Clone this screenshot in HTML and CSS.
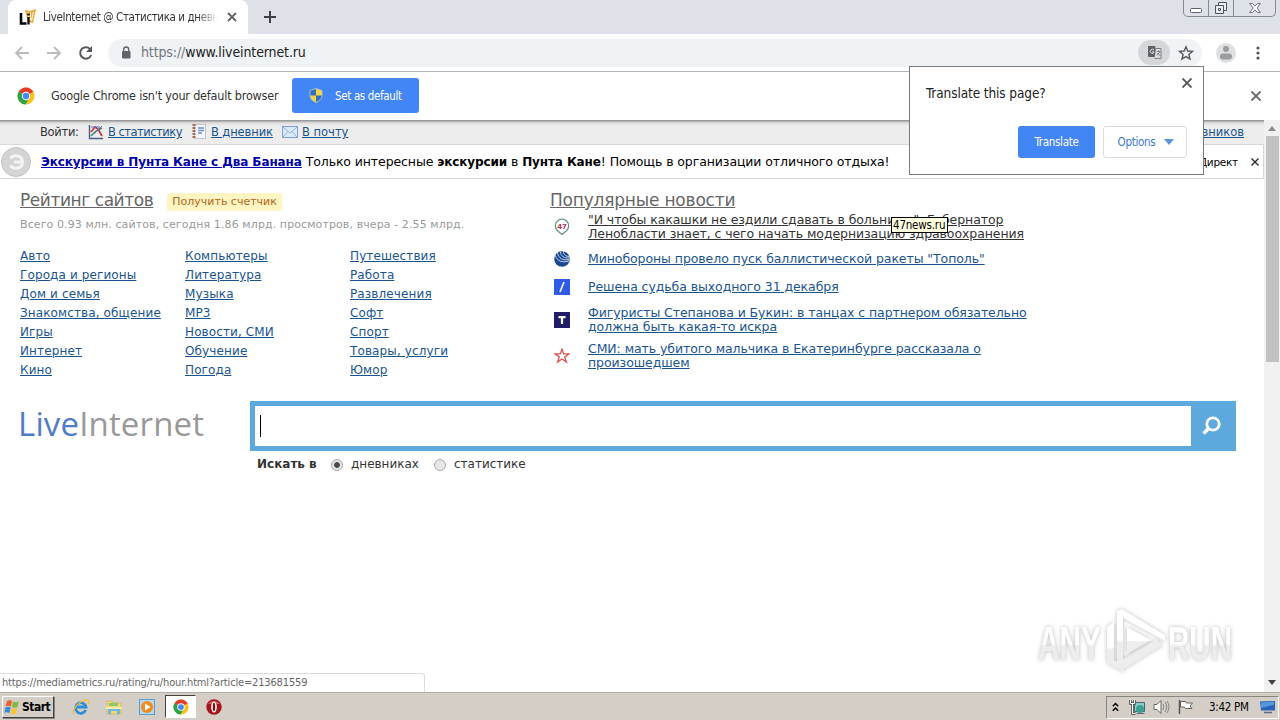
FILE: index.html
```html
<!DOCTYPE html>
<html lang="ru">
<head>
    <meta charset="UTF-8">
    <title>LiveInternet @ Статистика и дневники</title>
    <link rel="stylesheet" href="styles.css">
</head>
<body>
    <div class="tabstrip">
        <div class="tab">
            <svg class="tab-icon" width="18" height="18" viewBox="0 0 18 18">
                <path d="M6 2L11 3L17 1L14 15L9 14Z" fill="#e9a93a"/>
                <path d="M9 4l1 8M11.500 4v8M14.500 4l-2 9" stroke="#fff1c4" stroke-width="1.200"/>
                <path d="M2 5v10.500H7.500" fill="none" stroke="#000" stroke-width="2.600"/>
                <path d="M9.500 9v7.500M9.500 5.500v2" stroke="#000" stroke-width="2.200"/>
            </svg>
            <span class="tab-title">LiveInternet @ Статистика и дневники</span>
            <svg class="tab-close" width="10" height="10" viewBox="0 0 10 10"><path d="M1 1l8 8M9 1l-8 8" stroke="#5f6368" stroke-width="1.800"/></svg>
        </div>
        <svg class="new-tab" width="12" height="12" viewBox="0 0 12 12"><path d="M6 0v12M0 6h12" stroke="#3c4043" stroke-width="2"/></svg>
        <div class="win-buttons">
            <span class="win-btn"><svg width="14" height="15" viewBox="0 0 14 15"><rect x="1.500" y="8.500" width="11" height="4" rx="1" fill="#fff" stroke="#5b606c"/></svg></span>
            <span class="win-btn win-max"><svg width="14" height="15" viewBox="0 0 14 15"><g fill="#e8ebef" stroke="#4d525d"><path d="M4.500 2.500h8v8h-8z"/><path d="M1.500 5.500h8v8h-8z"/><path d="M4.500 8.500h2v2h-2z"/></g></svg></span>
            <span class="win-btn win-close"><svg width="14" height="15" viewBox="0 0 14 15"><path d="M1.500 3.500h3l2.500 2.500l2.500-2.500h3l-3.500 4.500l3.500 4.500h-3l-2.500-2.500l-2.500 2.500h-3l3.500-4.500z" fill="#fff" stroke="#70747c"/></svg></span>
        </div>
    </div>

    <div class="toolbar">
        <svg width="16" height="16" viewBox="0 0 16 16" class="nav nav-off"><path d="M15 8H2M8 2L2 8l6 6"/></svg>
        <svg width="16" height="16" viewBox="0 0 16 16" class="nav nav-off"><path d="M1 8h13M8 2l6 6l-6 6"/></svg>
        <svg width="16" height="16" viewBox="0 0 16 16" class="nav nav-on"><path d="M13.200 10A5.700 5.700 0 1 1 12 4l1 1"/><path d="M14 1v6H8z" class="solid"/></svg>
        <div class="omnibox">
            <svg class="lock" width="10" height="13" viewBox="0 0 10 13"><rect x="1" y="5" width="8.500" height="7.500" rx="1" fill="#5f6368"/><path d="M2.700 5V3.500a2.500 2.500 0 0 1 5 0V5" fill="none" stroke="#5f6368" stroke-width="1.400"/></svg>
            <span class="url"><span class="scheme">https://</span>www.liveinternet.ru</span>
            <span class="translate-chip">
                <svg width="15" height="15" viewBox="0 0 15 15">
                    <path d="M1 1h7l3 11H2a1 1 0 0 1-1-1z" fill="#5f6368"/>
                    <path d="M9 3.500h5v10H7.500" fill="#ddd" stroke="#7d8084"/>
                    <path d="M7 5.200A2 2 0 1 0 7.200 7H5" fill="none" stroke="#ddd"/>
                    <path d="M9.500 6.500h4M11.500 5.500v1M13 6.500l-3 4M10.500 8l3 3" stroke="#7d8084" fill="none"/>
                </svg>
            </span>
            <svg class="star" width="16" height="16" viewBox="0 0 16 16"><path d="M8 1.800l1.800 4.200l4.700.4l-3.600 3l1.100 4.600L8 11.600L4 14l1.100-4.600l-3.600-3l4.700-.4z" fill="none" stroke="#54585d" stroke-width="1.400"/></svg>
        </div>
        <svg class="avatar" width="20" height="20" viewBox="0 0 20 20"><circle cx="10" cy="10" r="10" fill="#dfe0e1"/><circle cx="10" cy="6" r="3" fill="#9a9ca0"/><rect x="4" y="10.500" width="12" height="6" rx="3" fill="#9a9ca0"/></svg>
        <svg class="dots" width="4" height="14" viewBox="0 0 4 14"><g fill="#505458"><circle cx="2" cy="2" r="1.600"/><circle cx="2" cy="7" r="1.600"/><circle cx="2" cy="12" r="1.600"/></g></svg>
    </div>

    <div class="infobar">
        <svg class="chrome-logo" width="18" height="18" viewBox="0 0 18 18">
            <circle cx="9" cy="9" r="8.500" fill="#fbc116"/>
            <path d="M9 9L1.640 4.750A8.500 8.500 0 0 1 16.360 4.750z" fill="#e33b2e"/>
            <path d="M9 9L1.640 4.750A8.500 8.500 0 0 0 8.500 17.500L12 11z" fill="#2ba24c"/>
            <circle cx="9" cy="9" r="4.200" fill="#fff"/><circle cx="9" cy="9" r="3.200" fill="#4587f4"/>
        </svg>
        <span class="infobar-text">Google Chrome isn't your default browser</span>
        <button class="default-btn">
            <svg width="14" height="15" viewBox="0 0 14 15">
                <path d="M7 .5L13 2.500V7c0 4-3 6-6 7.500C4 13 1 11 1 7V2.500z" fill="#f6d341" stroke="#b5c6d6" stroke-width=".8"/>
                <path d="M7 1v6.500H1.400V2.800zM7 7.500h5.600C12.400 11 10 12.500 7 14z" fill="#2e6fc0"/>
            </svg>
            <span>Set as default</span>
        </button>
        <svg class="infobar-close" width="10" height="10" viewBox="0 0 10 10"><path d="M.5.5l9 9M9.500.5l-9 9" stroke="#5f6368" stroke-width="1.800"/></svg>
    </div>

    <div class="viewport">
        <div class="page">
            <div class="login-bar">
                <span class="login-label">Войти:</span>
                <svg width="16" height="16" viewBox="0 0 16 16"><path d="M1.500 1v13.500H15" fill="none" stroke="#4a5f86" stroke-width="1.400"/><path d="M3 8l4-5l3 2l4 7" fill="none" stroke="#c83a4d" stroke-width="1.800"/><path d="M3 12l5-5l6-3" fill="none" stroke="#3c8a63" stroke-width="1.500"/><path d="M3 3h9M6 10l8-8" stroke="#6173b4" fill="none"/></svg>
                <a class="login-stat">В статистику</a>
                <svg width="16" height="16" viewBox="0 0 16 16"><rect x="3.500" y=".5" width="11" height="14" fill="#f4f7fb" stroke="#bcc3cd"/><path d="M3 0v15" stroke="#a86d50" stroke-width="3" stroke-dasharray="2 1"/><path d="M7 4h6M7 6.500h6M7 9h4" stroke="#6f8fc4" stroke-width="1.300"/></svg>
                <a class="login-diary">В дневник</a>
                <svg width="17" height="16" viewBox="0 0 17 16"><rect x=".5" y="2.500" width="15" height="11" fill="#dcebfa" stroke="#7ba0d4"/><path d="M1 3l7 6l7-6M1 13l5-5.500M15 13l-5-5.500" fill="none" stroke="#8eb2df"/></svg>
                <a class="login-mail">В почту</a>
                <a class="login-find">Поиск дневников</a>
            </div>
            <div class="ad">
                <svg width="30" height="30" viewBox="0 0 30 30"><circle cx="15" cy="15" r="14.500" fill="#d4d4d4" stroke="#c4c4c4"/><path d="M9.500 11.500C12 7.500 21.500 7.500 21.500 15S12 22.500 9.500 18.500M13 15h8" fill="none" stroke="#f4f4f4" stroke-width="3"/></svg>
                <p class="ad-text"><a>Экскурсии в Пунта Кане с Два Банана</a> Только интересные <b>экскурсии</b> в <b>Пунта Кане</b>! Помощь в организации отличного отдыха!</p>
                <span class="ad-direct">Яндекс.Директ</span>
                <svg class="ad-close" width="8" height="8" viewBox="0 0 8 8"><path d="M.5.5l7 7M7.500.5l-7 7" stroke="#222" stroke-width="1.300"/></svg>
            </div>

            <div class="columns">
                <div class="rating">
                    <div class="rating-head"><h2>Рейтинг сайтов</h2><span class="counter">Получить счетчик</span></div>
                    <p class="stats">Всего 0.93 млн. сайтов, сегодня 1.86 млрд. просмотров, вчера - 2.55 млрд.</p>
                    <div class="topics">
                        <ul><li><a>Авто</a></li><li><a>Города и регионы</a></li><li><a>Дом и семья</a></li><li><a>Знакомства, общение</a></li><li><a>Игры</a></li><li><a>Интернет</a></li><li><a>Кино</a></li></ul>
                        <ul><li><a>Компьютеры</a></li><li><a>Литература</a></li><li><a>Музыка</a></li><li><a>МР3</a></li><li><a>Новости, СМИ</a></li><li><a>Обучение</a></li><li><a>Погода</a></li></ul>
                        <ul><li><a>Путешествия</a></li><li><a>Работа</a></li><li><a>Развлечения</a></li><li><a>Софт</a></li><li><a>Спорт</a></li><li><a>Товары, услуги</a></li><li><a>Юмор</a></li></ul>
                    </div>
                </div>
                <div class="news">
                    <h2>Популярные новости</h2>
                    <div class="news-item hovered">
                        <svg width="16" height="18" viewBox="0 0 16 18"><path d="M8 16.500L3.500 12.800A6.700 6.700 0 1 1 12.500 12.800z" fill="#fff" stroke="#68987f" stroke-width="1.300"/><text x="8" y="10.500" class="badge-47">47</text></svg>
                        <a>"И чтобы какашки не ездили сдавать в больницы": Губернатор<br>Ленобласти знает, с чего начать модернизацию здравоохранения</a>
                    </div>
                    <div class="news-item single">
                        <svg width="16" height="16" viewBox="0 0 16 16"><circle cx="8" cy="8" r="7.800" fill="#1c4592"/><path d="M1 4c2 6 7 8 14 6M3.500 2c1 5 5 8 12 6.500M6.500 1c0 4 4 6.500 9 6M9.500 0c-.5 3 2 5.500 6 5.500" fill="none" stroke="#d7e3f5" stroke-width=".9"/></svg>
                        <a>Минобороны провело пуск баллистической ракеты "Тополь"</a>
                    </div>
                    <div class="news-item single">
                        <svg width="16" height="16" viewBox="0 0 16 16"><rect width="16" height="16" fill="#2f5be8"/><path d="M6 13L10 3" stroke="#fff" stroke-width="1.600"/></svg>
                        <a>Решена судьба выходного 31 декабря</a>
                    </div>
                    <div class="news-item">
                        <svg width="16" height="16" viewBox="0 0 16 16"><rect width="16" height="16" fill="#201c66"/><path d="M4.500 5.200h7M8 5v7" stroke="#fff" stroke-width="2.200"/></svg>
                        <a>Фигуристы Степанова и Букин: в танцах с партнером обязательно<br>должна быть какая-то искра</a>
                    </div>
                    <div class="news-item">
                        <svg width="16" height="16" viewBox="0 0 16 16"><path d="M8 1l1.700 4.900h5.300l-4.300 3.100l1.700 5L8 11l-4.400 3l1.700-5L1 5.900h5.300z" fill="#fff" stroke="#e0524f" stroke-width="1.300"/></svg>
                        <a>СМИ: мать убитого мальчика в Екатеринбурге рассказала о<br>произошедшем</a>
                    </div>
                </div>
            </div>

            <div class="search">
                <div class="logo"><span>Live</span>Internet</div>
                <div class="search-main">
                    <div class="search-box">
                        <div class="search-input"><i class="caret"></i></div>
                        <svg width="20" height="20" viewBox="0 0 20 20"><circle cx="12" cy="8" r="6.200" fill="none" stroke="#fff" stroke-width="2.800"/><path d="M7.500 12.500L2.500 17.500" stroke="#fff" stroke-width="3.600"/></svg>
                    </div>
                    <div class="search-where">
                        <b>Искать в</b>
                        <i class="radio checked"></i><span class="where-diary">дневниках</span>
                        <i class="radio"></i><span>статистике</span>
                    </div>
                </div>
            </div>
        </div>
        <div class="scrollbar">
            <i class="arrow up"></i>
            <i class="thumb"></i>
            <i class="arrow down"></i>
        </div>
    </div>

    <div class="taskbar">
        <div class="start">
            <svg width="17" height="16" viewBox="0 0 17 16"><path d="M3 2q3-1.500 5 0L7 7.500q-3-1.500-5.500 0z" fill="#e8622a"/><path d="M9 2.500q3 1.500 6 0L13.500 8q-3 1.500-5.500 0z" fill="#7fba42"/><path d="M1.300 8.500q3-1.500 5.500 0L5.500 14q-3-1.500-5.200 0z" fill="#3a8ddb"/><path d="M7.800 9q3 1.500 5.500 0L12 14.500q-3 1.500-5.500 0z" fill="#f7c331"/></svg>
            <span>Start</span>
        </div>
        <svg class="task-icon" width="18" height="18" viewBox="0 0 18 18"><path d="M13.700 12A5.300 5.300 0 1 1 14 9H5" fill="none" stroke="#2b8edb" stroke-width="2.800"/><path d="M2 16C-1 12 9 1 16 2q2 1 0 4" fill="none" stroke="#efbf39" stroke-width="1.400"/></svg>
        <svg class="task-icon" width="18" height="18" viewBox="0 0 18 18"><path d="M2 3h5l1 2h8v11H2z" fill="#f5d977" stroke="#d6b454" stroke-width=".8"/><path d="M4 5h9v3H4z" fill="#8fc66c"/><path d="M1 9h16v2H1z" fill="#fbeeb4"/><path d="M3 16v-5h12v5h-3v-3H6v3z" fill="#6cb6df"/></svg>
        <svg class="task-icon" width="18" height="18" viewBox="0 0 18 18"><rect x="1.500" y="1.500" width="15" height="15" fill="#b5d8ee" stroke="#5a9fc9"/><circle cx="9" cy="9" r="6" fill="#f28a1c"/><path d="M7 5.500l5.500 3.500L7 12.500z" fill="#fff"/></svg>
        <div class="task-active">
            <svg width="16" height="16" viewBox="0 0 18 18">
                <circle cx="9" cy="9" r="8.500" fill="#fbc116"/>
                <path d="M9 9L1.640 4.750A8.500 8.500 0 0 1 16.360 4.750z" fill="#e33b2e"/>
                <path d="M9 9L1.640 4.750A8.500 8.500 0 0 0 8.500 17.500L12 11z" fill="#2ba24c"/>
                <circle cx="9" cy="9" r="4.200" fill="#fff"/><circle cx="9" cy="9" r="3.200" fill="#4587f4"/>
            </svg>
        </div>
        <svg class="opera" width="16" height="16" viewBox="0 0 16 16"><circle cx="8" cy="8" r="7.700" fill="#a5151b"/><path d="M2 5a7 6 0 0 1 12 0z" fill="#d6565a"/><ellipse cx="8" cy="8" rx="2.800" ry="5.500" fill="#fff"/><ellipse cx="8" cy="8" rx="1.200" ry="4.300" fill="#7c0d12"/></svg>
        <div class="tray">
            <svg width="7" height="10" viewBox="0 0 7 10"><path d="M.8 4.300L3.500 1.500l2.700 2.800M.8 8.800L3.500 6l2.700 2.800" fill="none" stroke="#000" stroke-width="1.400"/></svg>
            <svg class="tray-net" width="17" height="16" viewBox="0 0 17 16"><path d="M5.500 3.500h10v9h-10z" fill="#8ccbd0" stroke="#4c6670"/><circle cx="11" cy="10" r="4" fill="#3aa193"/><path d="M7.500 14.500h8" stroke="#667"/><path d="M1.500 1v3.500h4V1M3.500 5v9.500h3" fill="none" stroke="#444" stroke-width="2.500"/><path d="M1.500 1v3.500h4V1M3.500 5v9.500h3" fill="none" stroke="#fff"/></svg>
            <svg class="tray-vol" width="17" height="16" viewBox="0 0 17 16"><path d="M1 5.500h3L8 1.500v13L4 10.500H1z" fill="#fff" stroke="#666"/><path d="M10 5q2 3 0 6M12 3q3.500 5 0 10M14 2q4 6 0 12" fill="none" stroke="#888"/></svg>
            <svg class="tray-flag" width="17" height="16" viewBox="0 0 17 16"><path d="M3.500 2.500h5l1 1.500h6l-2.500 3l2 2.500H8.500l-1-1.500h-4z" fill="#fff" stroke="#666"/><path d="M2.500 1v14" stroke="#555" stroke-width="1.500"/></svg>
            <span class="clock">3:42 PM</span>
            <svg class="tray-desk" width="16" height="14" viewBox="0 0 16 14"><path d="M0 1.500L15 1v9.500H1z" fill="#2463b5"/><path d="M1 2.500l13-.8v3L1 8z" fill="#5a96db"/><path d="M4 12.500h8" stroke="#5b6b85" stroke-width="1.500"/></svg>
        </div>
    </div>

    <!-- things floating over the page -->
    <div class="translate-popup">
        <div class="popup-head">
            <span>Translate this page?</span>
            <svg width="10" height="10" viewBox="0 0 10 10"><path d="M.5.5l9 9M9.500.5l-9 9" stroke="#4f5357" stroke-width="1.800"/></svg>
        </div>
        <div class="popup-buttons">
            <button class="btn-translate">Translate</button>
            <button class="btn-options">Options<i></i></button>
        </div>
    </div>
    <div class="tooltip">47news.ru</div>
    <div class="status">https://mediametrics.ru/rating/ru/hour.html?article=213681559</div>
    <svg class="watermark" width="204" height="68" viewBox="0 0 204 68">
        <defs>
            <linearGradient id="wm" x1="0" y1="0" x2="0" y2="1">
                <stop offset=".5" stop-color="#fff"/>
                <stop offset=".55" stop-color="#ededed"/>
            </linearGradient>
        </defs>
        <text x="4" y="52" textLength="63" lengthAdjust="spacingAndGlyphs">ANY</text>
        <g class="play">
            <path d="M73 19l7-5v38l10 5v7L73 55z"/>
            <path d="M83 3l5-2l43 26v6L89 10v41l33-19l7 5L88 62l-5-3z"/>
            <path d="M93 19l24 13l-24 14z"/>
        </g>
        <text x="134" y="52" textLength="64" lengthAdjust="spacingAndGlyphs">RUN</text>
    </svg>
</body>
</html>
```
FILE: styles.css
```css
* {
    box-sizing: border-box;
}
body {
    display: flex;
    flex-direction: column;
    width: 1280px;
    height: 720px;
    margin: 0;
    overflow: hidden;
    position: relative;
    background: #fff;
    color: #333;
    font-family: "DejaVu Sans", Verdana, sans-serif;
    font-size: 12px;
}
svg {
    display: block;
    flex: none;
}
h2, p, ul {
    margin: 0;
    padding: 0;
}
li {
    list-style: none;
}
a {
    color: #1a5490;
    text-decoration: underline;
}
span, a, b {
    white-space: nowrap;
}
.tabstrip, .toolbar, .infobar, .tab-title, .translate-popup, .status, .tooltip, .taskbar, button {
    font-family: "DejaVu Sans Condensed", Tahoma, sans-serif;
    font-stretch: condensed;
}

/* tab strip */
.tabstrip {
    display: flex;
    height: 34px;
    flex: none;
    background: #dee1e8;
}
.tab {
    display: flex;
    align-items: center;
    width: 240px;
    margin-left: 8px;
    padding-left: 11px;
    background: #fff;
    border-radius: 8px 8px 0 0;
}
.tab-title {
    width: 175px;
    margin-left: 6px;
    overflow: hidden;
    font-size: 11.5px;
    letter-spacing: -0.4px;
    -webkit-mask-image: linear-gradient(90deg, #000 88%, transparent);
    mask-image: linear-gradient(90deg, #000 88%, transparent);
}
.tab-close {
    margin-left: 9px;
}
.new-tab {
    margin: 11px 0 0 16px;
}
.win-buttons {
    display: flex;
    height: 17px;
    margin: 0 4px 0 auto;
    border: 1px solid #858a94;
    border-top: 0;
    border-radius: 0 0 5px 5px;
}
.win-btn {
    display: flex;
    justify-content: center;
    width: 24px;
}
.win-max {
    width: 26px;
    border: solid #858a94;
    border-width: 0 1px;
}
.win-close {
    width: 41px;
}

/* toolbar */
.toolbar {
    display: flex;
    align-items: center;
    height: 38px;
    flex: none;
    padding-left: 14px;
    border-bottom: 1px solid #b4b5b7;
}
.nav {
    margin-right: 16px;
    fill: none;
    stroke-width: 1.8;
}
.nav-off {
    stroke: #b9bbbe;
}
.nav-on {
    margin-right: 14px;
    stroke: #55595e;
    stroke-width: 2;
}
.nav .solid {
    fill: #55595e;
    stroke: none;
}
.omnibox {
    display: flex;
    align-items: center;
    width: 1094px;
    height: 28px;
    padding-left: 13px;
    border-radius: 14px;
    background: #f0f3f5;
}
.url {
    margin: -2px 0 0 10px;
    font-size: 14px;
    letter-spacing: -0.12px;
    color: #202124;
}
.scheme {
    color: #70757a;
}
.translate-chip {
    display: flex;
    align-items: center;
    justify-content: center;
    width: 32px;
    height: 25px;
    margin-left: auto;
    border-radius: 13px;
    background: #d5d8da;
}
.star {
    margin: 0 8px;
}
.avatar {
    margin-left: 14px;
}
.dots {
    margin-left: 20px;
}

/* default browser bar */
.infobar {
    display: flex;
    align-items: center;
    height: 48px;
    flex: none;
    padding: 0 0 1px 17px;
}
.infobar-text {
    width: 241px;
    margin: -1px 0 0 16px;
    font-size: 12.5px;
    letter-spacing: -0.19px;
}
.default-btn {
    display: flex;
    align-items: center;
    gap: 12px;
    width: 127px;
    height: 35px;
    padding: 0 0 0 17px;
    border: 0;
    border-radius: 3px;
    background: #4285f4;
    color: #fff;
    font-size: 11.5px;
    letter-spacing: -0.35px;
}
.infobar-close {
    margin: 1px 19px 0 auto;
}

/* page */
.viewport {
    display: flex;
    flex: 1;
    min-height: 0;
}
.page {
    flex: 1;
    min-width: 0;
}
.login-bar {
    display: flex;
    align-items: center;
    height: 24px;
    padding: 0 20px 0 40px;
    background: linear-gradient(#999 0, #999 1px, #cfcfcf 2px, #e4e4e4 4px, #ededed 6px);
    font-size: 11.5px;
}
.login-label {
    width: 48px;
    letter-spacing: -0.3px;
}
.login-bar a {
    margin-left: 4px;
}
.login-stat {
    width: 83px;
    letter-spacing: -0.5px;
}
.login-diary {
    width: 71px;
    letter-spacing: -0.1px;
}
.login-bar .login-mail {
    margin-left: 3px;
}
.login-bar .login-find {
    margin-left: auto;
}
.ad {
    display: flex;
    align-items: center;
    height: 35px;
    padding-left: 1px;
    border: 1px solid #d8d8d8;
    border-width: 1px 1px 1px 0;
    color: #000;
}
.ad-text {
    margin-left: 10px;
    font-size: 12.5px;
    letter-spacing: -0.1px;
    white-space: nowrap;
}
.ad-text a, .ad-text b {
    font-size: 12px;
    font-weight: bold;
}
.ad-text a {
    color: #0000a8;
}
.ad-direct {
    margin-left: auto;
    font-size: 10.5px;
    letter-spacing: -0.25px;
}
.ad-close {
    margin: 0 4px 0 13px;
}
.columns {
    display: flex;
    height: 222px;
    padding: 10px 0 0 20px;
}
.columns h2 {
    color: #666;
    font-size: 17px;
    font-weight: normal;
    letter-spacing: -0.43px;
    line-height: 22px;
    text-decoration: underline;
    white-space: nowrap;
}
.rating {
    width: 530px;
}
.rating-head {
    display: flex;
    align-items: center;
    gap: 14px;
}
.counter {
    width: 115px;
    height: 18px;
    margin-top: 4px;
    padding-left: 5px;
    background: #fff5c2;
    border-radius: 3px;
    color: #b3661a;
    font-size: 11px;
    line-height: 18px;
}
.stats {
    margin-top: 6px;
    color: #999;
    font-size: 11px;
    letter-spacing: 0.1px;
    line-height: 16px;
}
.topics {
    display: flex;
    margin-top: 14px;
}
.topics ul {
    width: 165px;
}
.topics li {
    height: 19px;
    letter-spacing: 0.12px;
    line-height: 19px;
}
.news h2 {
    width: 186px;
    letter-spacing: -0.2px;
}
.news-item {
    display: flex;
    align-items: center;
    height: 28px;
    margin-bottom: 8px;
    padding-left: 4px;
    font-size: 12.5px;
    letter-spacing: -0.08px;
    line-height: 14px;
}
.news-item svg {
    margin-right: 18px;
}
.news-item.hovered {
    margin: 2px 0 11px;
}
.news-item.hovered a {
    color: #333;
}
.news-item.single {
    height: 14px;
    margin-bottom: 14px;
}
.news-item.single + .news-item:not(.single) {
    margin-top: -2px;
}
.badge-47 {
    fill: #b8304d;
    font-size: 7px;
    font-weight: bold;
    text-anchor: middle;
}

/* search */
.search {
    display: flex;
    padding-left: 18px;
}
.logo {
    width: 232px;
    padding-top: 3px;
    color: #999;
    font-family: "Open Sans", "Trebuchet MS", sans-serif;
    font-size: 33px;
    letter-spacing: 0.15px;
    line-height: 40px;
}
.logo span {
    color: #4f7cc4;
}
.search-box {
    display: flex;
    align-items: center;
    width: 986px;
    height: 50px;
    padding: 5px;
    background: #5da8dc;
}
.search-input {
    display: flex;
    align-items: center;
    width: 936px;
    height: 40px;
    margin-right: 10px;
    padding-left: 5px;
    background: #fff;
}
.caret {
    width: 1px;
    height: 22px;
    background: #000;
}
.search-where {
    display: flex;
    align-items: center;
    height: 26px;
    padding-left: 7px;
    font-size: 12px;
}
.search-where b {
    width: 74px;
}
.radio {
    width: 12px;
    height: 12px;
    margin: 2px 8px 0 0;
    border: 1px solid #a9a9a9;
    border-radius: 50%;
    background: #e6e6e6;
}
.radio.checked {
    background: radial-gradient(circle, #4c4c4c 0, #4c4c4c 2.5px, #e6e6e6 3.3px);
}
.where-diary {
    width: 83px;
}

.scrollbar {
    display: flex;
    flex-direction: column;
    align-items: center;
    width: 16px;
    background: #f1f1f1;
}
.arrow {
    border: 4px solid transparent;
}
.arrow.up {
    margin-top: 2px;
    border-bottom: 5px solid #8b8b8b;
}
.arrow.down {
    margin: auto 0 3px;
    border-top: 5px solid #404040;
}
.thumb {
    width: 13px;
    height: 226px;
    margin-top: 5px;
    background: #c1c1c1;
}

/* taskbar */
.taskbar {
    display: flex;
    align-items: center;
    height: 28px;
    flex: none;
    border-top: 1px solid #b3b0aa;
    background: #d5cec6;
    color: #000;
}
.start {
    display: flex;
    align-items: center;
    gap: 1px;
    width: 52px;
    height: 22px;
    margin: 0 18px 0 2px;
    border: 1px solid;
    border-color: #fff #404040 #404040 #fff;
    box-shadow: 1px 1px 0 #88857f;
    font-size: 12px;
    font-weight: bold;
    letter-spacing: -0.5px;
}
.start svg {
    margin-left: 1px;
}
.task-icon {
    margin-right: 15px;
}
.task-active {
    display: flex;
    align-items: center;
    justify-content: center;
    width: 31px;
    height: 23px;
    margin-left: -6px;
    border: 1px solid;
    border-color: #404040 #fff #fff #404040;
    background: #fff;
}
.opera {
    margin-left: 10px;
}
.tray {
    display: flex;
    align-items: center;
    width: 173px;
    height: 23px;
    margin: 1px 1px 0 auto;
    padding-left: 5px;
    border: 1px solid;
    border-color: #88857f #fff #fff #88857f;
    font-size: 11.5px;
}
.tray-net {
    margin-left: 10px;
}
.tray-vol {
    margin-left: 7px;
}
.tray-flag {
    margin-left: 7px;
}
.clock {
    width: 40px;
    margin-left: 15px;
    letter-spacing: -0.3px;
}
.tray-desk {
    margin-left: 11px;
}

/* overlays */
.translate-popup {
    position: absolute;
    left: 909px;
    top: 66px;
    width: 295px;
    height: 109px;
    padding: 11px 11px 0 16px;
    border: 1px solid #77797b;
    background: #fff;
    color: #202124;
}
.popup-head {
    display: flex;
    justify-content: space-between;
    font-size: 13.5px;
    letter-spacing: -0.1px;
    line-height: 31px;
}
.popup-buttons {
    display: flex;
    justify-content: flex-end;
    gap: 8px;
    margin-top: 17px;
    padding-right: 5px;
}
.popup-buttons button {
    height: 32px;
    padding: 0;
    border: 0;
    border-radius: 3px;
    font-size: 11.5px;
    letter-spacing: -0.3px;
}
.btn-translate {
    width: 77px;
    background: #4285f4;
    color: #fff;
}
.popup-buttons .btn-options {
    display: flex;
    align-items: center;
    justify-content: center;
    gap: 9px;
    width: 84px;
    padding-left: 2px;
    border: 1px solid #dadce0;
    background: #fff;
    color: #3a78d0;
}
.btn-options i {
    border: 5px solid transparent;
    border-top: 6px solid #5794e2;
    border-bottom: 0;
}
.tooltip {
    position: absolute;
    left: 891px;
    top: 217px;
    width: 57px;
    height: 16px;
    padding-left: 1px;
    border: 1px solid #000;
    background: #ffffe1;
    color: #000;
    font-size: 11.5px;
    letter-spacing: -0.2px;
    line-height: 15px;
}
.status {
    position: absolute;
    left: 0;
    top: 673px;
    width: 425px;
    height: 19px;
    padding-left: 2px;
    border: 1px solid #dcdcdc;
    border-width: 1px 1px 0 0;
    border-radius: 0 3px 0 0;
    background: #fff;
    color: #666;
    font-size: 11px;
    letter-spacing: -0.16px;
    line-height: 18px;
}
.watermark {
    position: absolute;
    left: 1034px;
    top: 608px;
    filter: drop-shadow(0 0 2px #bbb);
}
.watermark text {
    fill: url(#wm);
    font-family: "Liberation Sans", Arial, sans-serif;
    font-size: 48px;
    font-weight: bold;
}
.play {
    fill: url(#wm);
}
```
